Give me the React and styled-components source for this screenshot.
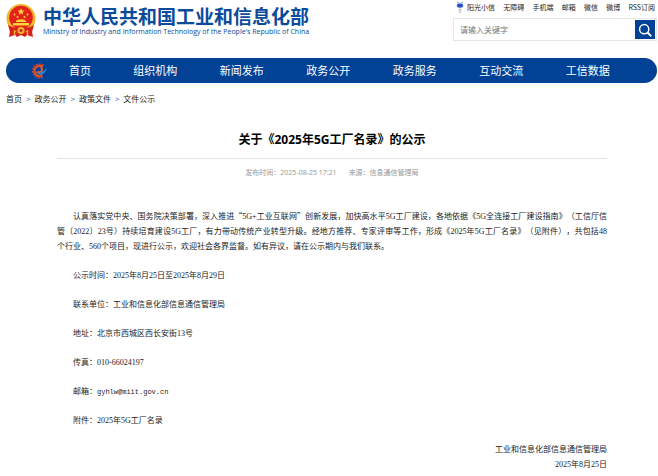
import React, { useState } from 'react';
import styled, { createGlobalStyle } from 'styled-components';

const GlobalStyle = createGlobalStyle`
  * {
    box-sizing: border-box;
  }

  body {
    margin: 0;
    background: #fff;
    color: #222;
    font-family: "Noto Sans CJK SC", sans-serif;
    font-size: 8px;
    text-spacing-trim: space-all;
  }

  a {
    color: inherit;
    text-decoration: none;
  }
`;

const Page = styled.div`
  padding: 0 1px 0 6px;
`;

const Header = styled.header`
  display: flex;
  justify-content: space-between;
  height: 58px;
`;

const Brand = styled.a`
  display: flex;
  align-items: flex-start;
  gap: 7px;
  padding-top: 4px;
  color: #0a4b9c;
`;

const BrandName = styled.h1`
  margin: 0;
  font-size: 19px;
  line-height: 24px;
  white-space: nowrap;
`;

const BrandEnglish = styled.div`
  font-family: "Open Sans", sans-serif;
  font-size: 7px;
  line-height: 8px;
  white-space: nowrap;
`;

const Tools = styled.div`
  width: 204px;
`;

const ToolLinks = styled.nav`
  display: flex;
  justify-content: space-between;
  align-items: center;
  height: 14px;
  padding: 0 2px 0 3px;
  font-size: 7px;
  white-space: nowrap;
`;

const ToolLink = styled.a`
  display: flex;
  align-items: center;
  gap: 3px;
`;

const SearchForm = styled.form`
  display: flex;
  height: 23px;
  margin-top: 4px;
  padding: 1px;
  border: 1px solid #e6e6e6;
`;

const SearchInput = styled.input`
  flex: 1;
  min-width: 0;
  padding: 0 5px;
  border: 0;
  outline: none;
  font-family: inherit;
  font-size: 8px;

  &::placeholder {
    color: #757575;
  }
`;

const SearchButton = styled.button`
  display: flex;
  align-items: center;
  justify-content: center;
  width: 20px;
  padding: 0;
  border: 0;
  background: #014196;
`;

const NavBar = styled.nav`
  display: flex;
  align-items: center;
  height: 25px;
  padding: 0 26px 0 25px;
  border-radius: 13px;
  background: #014196;
  color: #fff;
  font-size: 11px;
`;

const NavLink = styled.a`
  flex: ${props => (props.$home ? '0 0 64px' : '1')};
  text-align: center;
  line-height: 25px;
`;

const Breadcrumb = styled.nav`
  display: flex;
  gap: 4px;
  height: 32px;
  line-height: 32px;
`;

const Separator = styled.span`
  color: #2a66a8;
`;

const Article = styled.article`
  margin: 0 50px 0 51px;
`;

const Title = styled.h2`
  margin: 0;
  padding: 15px 0 8px;
  border-bottom: 1px solid #e3e3e3;
  color: #000;
  font-family: "Noto Sans", "Noto Sans CJK SC", sans-serif;
  font-size: 12px;
  line-height: 20px;
  text-align: center;
`;

const Meta = styled.div`
  display: flex;
  justify-content: center;
  gap: 12px;
  margin-bottom: 21px;
  color: #999;
  font-family: "Noto Sans", "Noto Sans CJK SC", sans-serif;
  font-size: 7px;
  line-height: 28px;
`;

const Paragraph = styled.p`
  margin: 0 0 14px;
  font-size: 8px;
  line-height: 15px;
  text-align: justify;
  text-indent: 16px;
`;

const Digits = styled.span`
  font-family: "Liberation Serif", serif;
  line-height: 1;
`;

const Email = styled.span`
  font-family: "Liberation Mono", monospace;
  font-size: 7px;
  line-height: 1;
`;

const Signature = styled.div`
  line-height: 15px;
  text-align: right;
`;

const Emblem = () => (
  <svg width="30" height="34" viewBox="0 0 30 34">
    <path d="M5 22 L3 33 L9 31 L11 33 L15 31 L19 33 L21 31 L27 33 L25 22 Z" fill="#d8201c" />
    <circle cx="15" cy="14.5" r="14.5" fill="#f0b52c" />
    <circle cx="15" cy="13.5" r="11.8" fill="#e2231a" />
    <path d="M15 4 L16 6.4 L18.6 6.6 L16.6 8.2 L17.2 10.7 L15 9.3 L12.8 10.7 L13.4 8.2 L11.4 6.6 L14 6.4 Z" fill="#fbd43c" />
    <g fill="#fbd43c">
      <circle cx="8.5" cy="10.5" r="1" />
      <circle cx="21.5" cy="10.5" r="1" />
      <circle cx="11.5" cy="13" r="1" />
      <circle cx="18.5" cy="13" r="1" />
      <path d="M10 17 L12 15.5 H18 L20 17 V18 H10 Z" />
      <path d="M7 19 H23 V21.5 H7 Z" />
    </g>
    <path d="M2 21 Q8 25.5 15 23.5 Q22 25.5 28 21 L26 28 L20 27 L18 31 H12 L10 27 L4 28 Z" fill="#d8201c" />
    <circle cx="15" cy="26.5" r="3.6" fill="#f0b52c" />
    <circle cx="15" cy="26.5" r="1.5" fill="#d8201c" />
    <path d="M8.5 26 V31 M21.5 26 V31" stroke="#f0b52c" strokeWidth="1.4" />
  </svg>
);

const Mascot = () => (
  <svg width="8" height="13" viewBox="0 0 8 13">
    <path d="M1 1 L3 2 M7 1 L5 2" stroke="#7c9be0" strokeWidth="1" />
    <ellipse cx="4" cy="4.5" rx="3.5" ry="3" fill="#bfd0f3" />
    <rect x="1" y="2.8" width="6" height="3.6" rx="1.8" fill="#274fc4" />
    <path d="M2.5 8 H5.5 L5 12 H3 Z" fill="#c9d6f1" />
    <path d="M3 8 H5 V9 H3 Z" fill="#e8b86a" />
  </svg>
);

const GearLogo = () => (
  <svg width="17" height="16" viewBox="0 0 17 16" fill="none">
    <path d="M12.4 2.6 A6.6 6.6 0 1 0 12.4 13.4" stroke="#c9472f" strokeWidth="2" strokeDasharray="1.8 1" />
    <path d="M11.6 4 A5 5 0 1 0 11.4 12" stroke="#d9502f" strokeWidth="2.4" />
    <path d="M5.5 9.2 Q10.4 9.4 11.2 7 Q11.4 4.8 9.4 4.4" stroke="#e0603c" strokeWidth="1.8" />
    <path d="M6.6 10 Q8 12.4 11 11.2 Q14.8 9.6 16 5 Q13.5 8 10.5 9.2 Q8.4 10 6.6 10 Z" fill="#2f8fd0" />
  </svg>
);

const SearchIcon = () => (
  <svg width="14" height="14" viewBox="0 0 14 14" fill="none" stroke="#fff" strokeLinecap="round">
    <circle cx="6.2" cy="6.2" r="4.6" strokeWidth="1.5" />
    <path d="M9.8 9.8 L12.6 12.6" strokeWidth="2" />
  </svg>
);

const toolLinks = ['阳光小信', '无障碍', '手机端', '邮箱', '微信', '微博', 'RSS订阅'];
const navLinks = ['首页', '组织机构', '新闻发布', '政务公开', '政务服务', '互动交流', '工信数据'];
const crumbs = ['首页', '政务公开', '政策文件', '文件公示'];

const paragraphs = [
  // the word joiner keeps 个 together with 行业
  '认真落实党中央、国务院决策部署，深入推进“5G+工业互联网”创新发展，加快高水平5G工厂建设，各地依据《5G全连接工厂建设指南》（工信厅信管〔2022〕23号）持续培育建设5G工厂，有力带动传统产业转型升级。经地方推荐、专家评审等工作，形成《2025年5G工厂名录》（见附件），共包括48个\u2060行业、560个项目，现进行公示，欢迎社会各界监督。如有异议，请在公示期内与我们联系。',
  '公示时间：2025年8月25日至2025年8月29日',
  '联系单位：工业和信息化部信息通信管理局',
  '地址：北京市西城区西长安街13号',
  '传真：010-66024197',
  '邮箱：gyhlw@miit.gov.cn',
  '附件：2025年5G工厂名录',
];

// half-width runs get their own face, the rest stays in the CJK one
const mixed = text =>
  text.split(/([\x21-\x7e]+)/).map((part, i) => {
    if (i % 2 === 0) return part;
    return part.includes('@') ? <Email key={i}>{part}</Email> : <Digits key={i}>{part}</Digits>;
  });

const App = () => {
  const [keyword, setKeyword] = useState('');

  return (
    <>
      <GlobalStyle />
      <Page lang="zh-CN">
        <Header>
          <Brand href="#">
            <Emblem />
            <div>
              <BrandName>中华人民共和国工业和信息化部</BrandName>
              <BrandEnglish>
                Ministry of Industry and Information Technology of the People's Republic of China
              </BrandEnglish>
            </div>
          </Brand>
          <Tools>
            <ToolLinks>
              {toolLinks.map((label, i) => (
                <ToolLink key={label} href="#">
                  {i === 0 && <Mascot />}
                  {label}
                </ToolLink>
              ))}
            </ToolLinks>
            <SearchForm onSubmit={e => e.preventDefault()}>
              <SearchInput
                aria-label="请输入关键字"
                placeholder="请输入关键字"
                value={keyword}
                onChange={e => setKeyword(e.target.value)}
              />
              <SearchButton aria-label="搜索">
                <SearchIcon />
              </SearchButton>
            </SearchForm>
          </Tools>
        </Header>
        <NavBar>
          <GearLogo />
          {navLinks.map((label, i) => (
            <NavLink key={label} href="#" $home={i === 0}>{label}</NavLink>
          ))}
        </NavBar>
        <Breadcrumb>
          {crumbs.map((label, i) => (
            <React.Fragment key={label}>
              {i > 0 && <Separator>&gt;</Separator>}
              <a href="#">{label}</a>
            </React.Fragment>
          ))}
        </Breadcrumb>
        <Article>
          <Title>关于《2025年5G工厂名录》的公示</Title>
          <Meta>
            <span>发布时间：2025-08-25 17:21</span>
            <span>来源：信息通信管理局</span>
          </Meta>
          {paragraphs.map(text => <Paragraph key={text}>{mixed(text)}</Paragraph>)}
          <Signature>
            <div>工业和信息化部信息通信管理局</div>
            <div>{mixed('2025年8月25日')}</div>
          </Signature>
        </Article>
      </Page>
    </>
  );
};

export default App;
